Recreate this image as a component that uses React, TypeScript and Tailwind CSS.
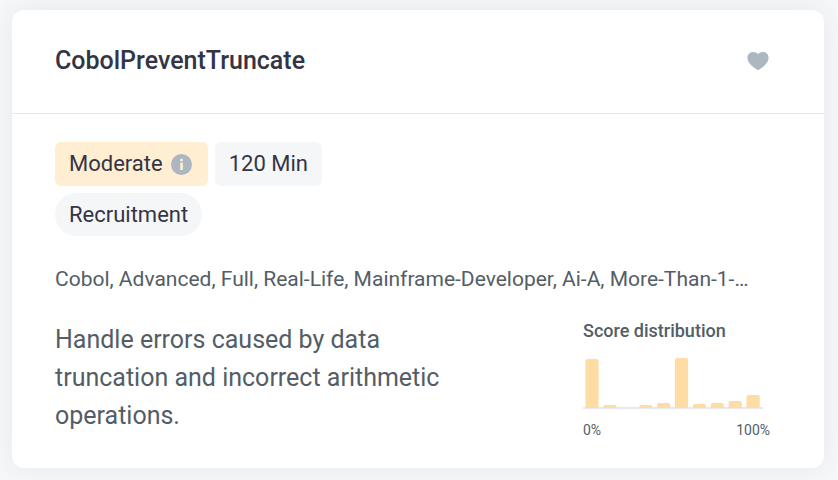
import type { ReactNode } from 'react';

const tags = ['Cobol', 'Advanced', 'Full', 'Real-Life', 'Mainframe-Developer', 'Ai-A', 'More-Than-1-…'];
const scores = [49, 3, 0, 3, 5, 50, 4, 5, 7, 13];

function HeartIcon() {
  return (
    <svg width="22" height="20" viewBox="0 0 22 20" fill="currentColor" aria-hidden="true">
      <path d="M11 19.2C10.2 18.9 0.4 13.4 0.4 6.8C0.4 3.3 2.8 0.9 5.9 0.9C8.2 0.9 10 1.8 11 3.2C12 1.8 13.8 0.9 16.1 0.9C19.2 0.9 21.6 3.3 21.6 6.8C21.6 13.4 11.8 18.9 11 19.2Z" />
    </svg>
  );
}

function InfoIcon() {
  return (
    <svg width="21" height="21" viewBox="0 0 22 22" aria-hidden="true">
      <circle cx="11" cy="11" r="11" fill="#adb7c2" />
      <rect x="9.7" y="5" width="2.8" height="2.6" rx="0.5" fill="#ffeed2" />
      <rect x="9.7" y="9" width="2.8" height="7.8" rx="0.4" fill="#ffeed2" />
    </svg>
  );
}

function Badge({ className, children }: { className: string; children: ReactNode }) {
  return (
    <span className={`flex items-center gap-2 text-[22px] leading-7 text-[#333545] ${className}`}>
      {children}
    </span>
  );
}

function ScoreChart() {
  return (
    <svg className="mt-[15px]" width="180" height="54" viewBox="0 0 180 54" role="img" aria-label="Score distribution">
      <rect x="0" y="51" width="180" height="2" fill="#e6e9ee" />
      {scores.map((h, i) =>
        h > 0 ? (
          <path
            key={i}
            fill="#ffdca3"
            d={`M${2.4 + i * 17.9} 52V${54 - h}q0 -2 2 -2h9.2q2 0 2 2V52z`}
          />
        ) : null
      )}
    </svg>
  );
}

export default function App() {
  return (
    <div className="min-h-screen bg-[#f7f8fa] pt-2.5 pb-3 pl-3 pr-3.5 font-['Roboto',sans-serif]">
      <article className="rounded-xl bg-white shadow-[0_0_32px_rgba(40,50,65,0.09)]">
        <header className="flex h-26 items-center justify-between border-b border-[#e5e7e9] pb-0.5 pl-[43px] pr-[55px]">
          <h2 className="text-[25px] leading-8 font-medium text-[#333545]">CobolPreventTruncate</h2>
          <button type="button" aria-label="Add to favorites" className="text-[#adb7c2]">
            <HeartIcon />
          </button>
        </header>

        <div className="pt-7 pb-7 pl-[43px] pr-[54px]">
          <div className="flex gap-[7px]">
            <Badge className="h-11 rounded-md bg-[#ffeed2] pl-3.5 pr-4">
              Moderate
              <InfoIcon />
            </Badge>
            <Badge className="h-11 rounded-md bg-[#f5f6f8] px-3.5">120 Min</Badge>
          </div>
          <div className="mt-[7px] flex">
            <Badge className="h-[43px] rounded-full bg-[#f5f6f8] px-3.5">Recruitment</Badge>
          </div>

          <p className="mt-7 truncate text-[21px] leading-[30px] text-[#535d66]">{tags.join(', ')}</p>

          <div className="mt-[27px] flex items-start justify-between">
            <p className="max-w-[420px] text-[25px] leading-[38px] text-[#535d66]">
              Handle errors caused by data truncation and incorrect arithmetic operations.
            </p>
            <div className="w-[187px] shrink-0 text-[#535d66]">
              <h3 className="text-lg leading-5 font-medium">Score distribution</h3>
              <ScoreChart />
              <div className="mt-2.5 flex justify-between text-sm leading-5">
                <span>0%</span>
                <span>100%</span>
              </div>
            </div>
          </div>
        </div>
      </article>
    </div>
  );
}
